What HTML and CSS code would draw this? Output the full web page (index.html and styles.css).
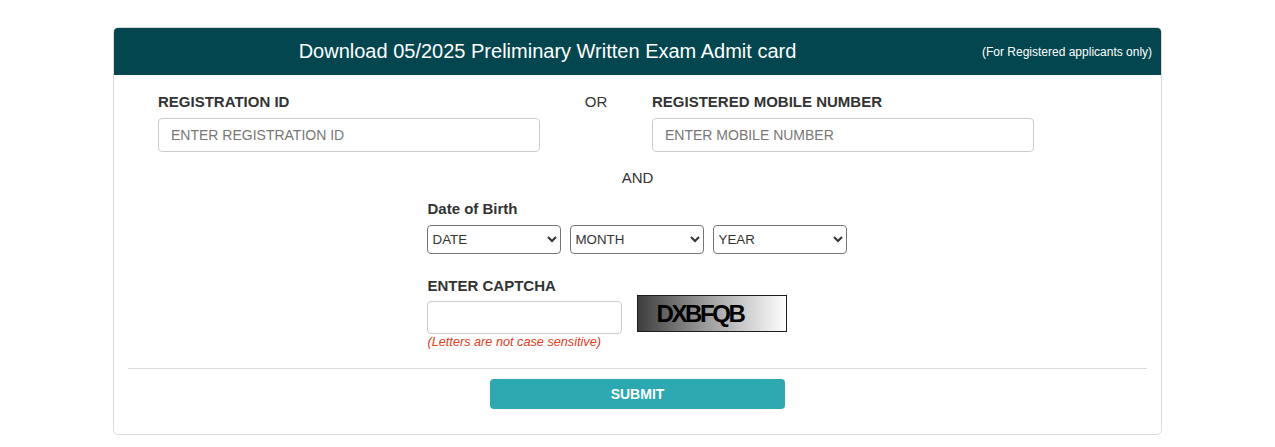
FILE: index.html
```html
<!DOCTYPE html>
<html lang="en">
<head>
<meta charset="utf-8">
<title>Download Admit Card</title>
<link rel="stylesheet" href="styles.css">
</head>
<body>
<div class="card">
  <div class="card-head">
    <h1 class="title">Download 05/2025 Preliminary Written Exam Admit card</h1>
    <div class="note-head">(For Registered applicants only)</div>
  </div>
  <div class="card-body">
    <div class="id-row">
      <div class="field">
        <label class="label">REGISTRATION ID</label>
        <input class="text-input" type="text" placeholder="ENTER REGISTRATION ID">
      </div>
      <div class="or">OR</div>
      <div class="field">
        <label class="label">REGISTERED MOBILE NUMBER</label>
        <input class="text-input" type="text" placeholder="ENTER MOBILE NUMBER">
      </div>
    </div>
    <div class="and">AND</div>
    <div class="center-block">
      <label class="label">Date of Birth</label>
      <div class="dob-row">
        <select class="dob"><option>DATE</option></select>
        <select class="dob"><option>MONTH</option></select>
        <select class="dob"><option>YEAR</option></select>
      </div>
      <label class="label captcha-label">ENTER CAPTCHA</label>
      <div class="captcha-row">
        <div class="captcha-left">
          <input class="captcha-input" type="text">
          <div class="hint">(Letters are not case sensitive)</div>
        </div>
        <div class="captcha-img"><span>DXBFQB</span></div>
      </div>
    </div>
    <hr class="sep">
    <div class="submit-row">
      <button class="submit" type="button">SUBMIT</button>
    </div>
  </div>
</div>
</body>
</html>
```
FILE: styles.css
```css
* { box-sizing: border-box; }
body {
  margin: 0;
  padding-top: 27px;
  background: #fff;
  font-family: "Liberation Sans", Arial, sans-serif;
  color: #333;
}
.card {
  width: 1049px;
  margin: 0 auto;
  border: 1px solid #dcdcdc;
  border-radius: 5px;
  overflow: hidden;
}
.card-head {
  display: flex;
  align-items: center;
  height: 48px;
  margin: -1px -1px 0 -1px;
  background: #03464f;
  color: #fff;
}
.title {
  flex: 0 0 869px;
  margin: 0;
  text-align: center;
  font-size: 20px;
  font-weight: normal;
}
.note-head {
  flex: 1;
  text-align: right;
  white-space: nowrap;
  padding-right: 10px;
  font-size: 12px;
  padding-top: 2px;
}
.card-body {
  padding: 17px 14px 25px 14px;
}
.id-row {
  display: flex;
  padding-left: 30px;
}
.field {
  width: 382px;
  display: flex;
  flex-direction: column;
}
.label {
  display: block;
  font-size: 15px;
  font-weight: bold;
  line-height: 20px;
  color: #333;
  margin-bottom: 6px;
}
.or {
  width: 112px;
  text-align: center;
  font-size: 15px;
  line-height: 20px;
}
.text-input {
  height: 34px;
  border: 1px solid #ccc;
  border-radius: 4px;
  padding: 0 12px;
  font-family: "Liberation Sans", Arial, sans-serif;
  font-size: 14px;
  color: #555;
}
.text-input::placeholder { color: #777; }
.and {
  text-align: center;
  font-size: 15px;
  line-height: 20px;
  margin-top: 16px;
  margin-bottom: 11px;
}
.center-block {
  width: 420px;
  margin: 0 auto;
}
.dob-row {
  display: flex;
  gap: 9px;
  margin-left: -1px;
}
.dob {
  width: 134px;
  height: 29px;
  font-family: "Liberation Sans", Arial, sans-serif;
  font-size: 13.33px;
  color: #333;
  border: 1px solid #767676;
  border-radius: 4px;
  background: #fff;
  padding: 0 1px;
}
.captcha-label {
  margin-top: 22px;
  margin-bottom: 0;
}
.captcha-row {
  display: flex;
  align-items: flex-start;
  margin-left: -1px;
  margin-top: -1px;
}
.captcha-left {
  padding-top: 6px;
  width: 195px;
}
.captcha-input {
  width: 195px;
  height: 33px;
  border: 1px solid #ccc;
  border-radius: 4px;
}
.hint {
  font-size: 12.7px;
  font-style: italic;
  color: #e0401a;
  line-height: 15px;
  margin-top: 1px;
  padding-left: 1px;
}
.captcha-img {
  width: 150px;
  height: 37px;
  margin-left: 15px;
  border: 1px solid #1c1c1c;
  background: linear-gradient(to right, #3e3e3e 0%, #9a9a9a 45%, #ffffff 100%);
  padding-left: 19px;
  display: flex;
  align-items: center;
}
.captcha-img span {
  font-size: 24px;
  font-weight: bold;
  letter-spacing: -2.4px;
  color: #000;
  line-height: 1;
}
.sep {
  border: 0;
  border-top: 1px solid #ddd;
  margin: 18px 0 10px 0;
}
.submit-row {
  display: flex;
  justify-content: center;
}
.submit {
  width: 295px;
  height: 30px;
  border: 0;
  border-radius: 4px;
  background: #2ca8b1;
  color: #fff;
  font-family: "Liberation Sans", Arial, sans-serif;
  font-size: 14px;
  font-weight: bold;
}
```
